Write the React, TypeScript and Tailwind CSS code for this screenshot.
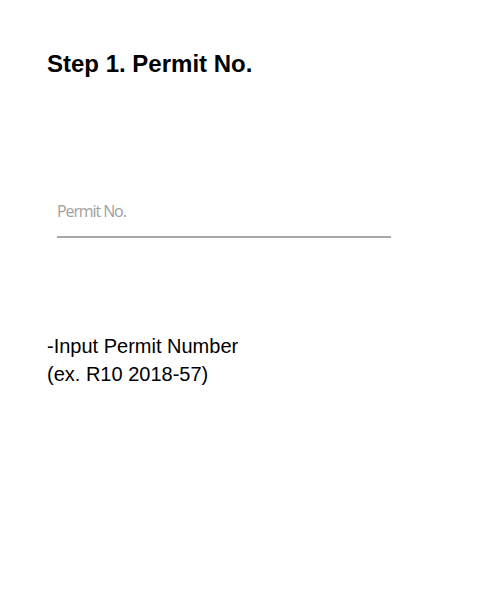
import React from "react";

export default function App() {
  return (
    <div className="w-[500px] h-[602px] bg-white font-['Liberation_Sans',Arial,sans-serif] text-black">
      <div className="pl-[47px] pt-[50px]">
        {/* Step title */}
        <h1 className="text-[24px] font-bold leading-[28px]">Step 1. Permit No.</h1>

        {/* Input field */}
        <div className="mt-[120px] ml-[10px] w-[334px]">
          <input
            type="text"
            placeholder="Permit No."
            className="w-full h-[40px] pb-[13px] border-b-2 border-[#a8a8a8] bg-transparent outline-none font-['Open_Sans',sans-serif] text-[16px] tracking-[-1.1px] text-[#555] placeholder:text-[#a0a0a0]"
          />
        </div>

        {/* Hint */}
        <p className="mt-[94px] text-[20px] leading-[28px]">
          -Input Permit Number
          <br />
          (ex. R10 2018-57)
        </p>
      </div>
    </div>
  );
}
